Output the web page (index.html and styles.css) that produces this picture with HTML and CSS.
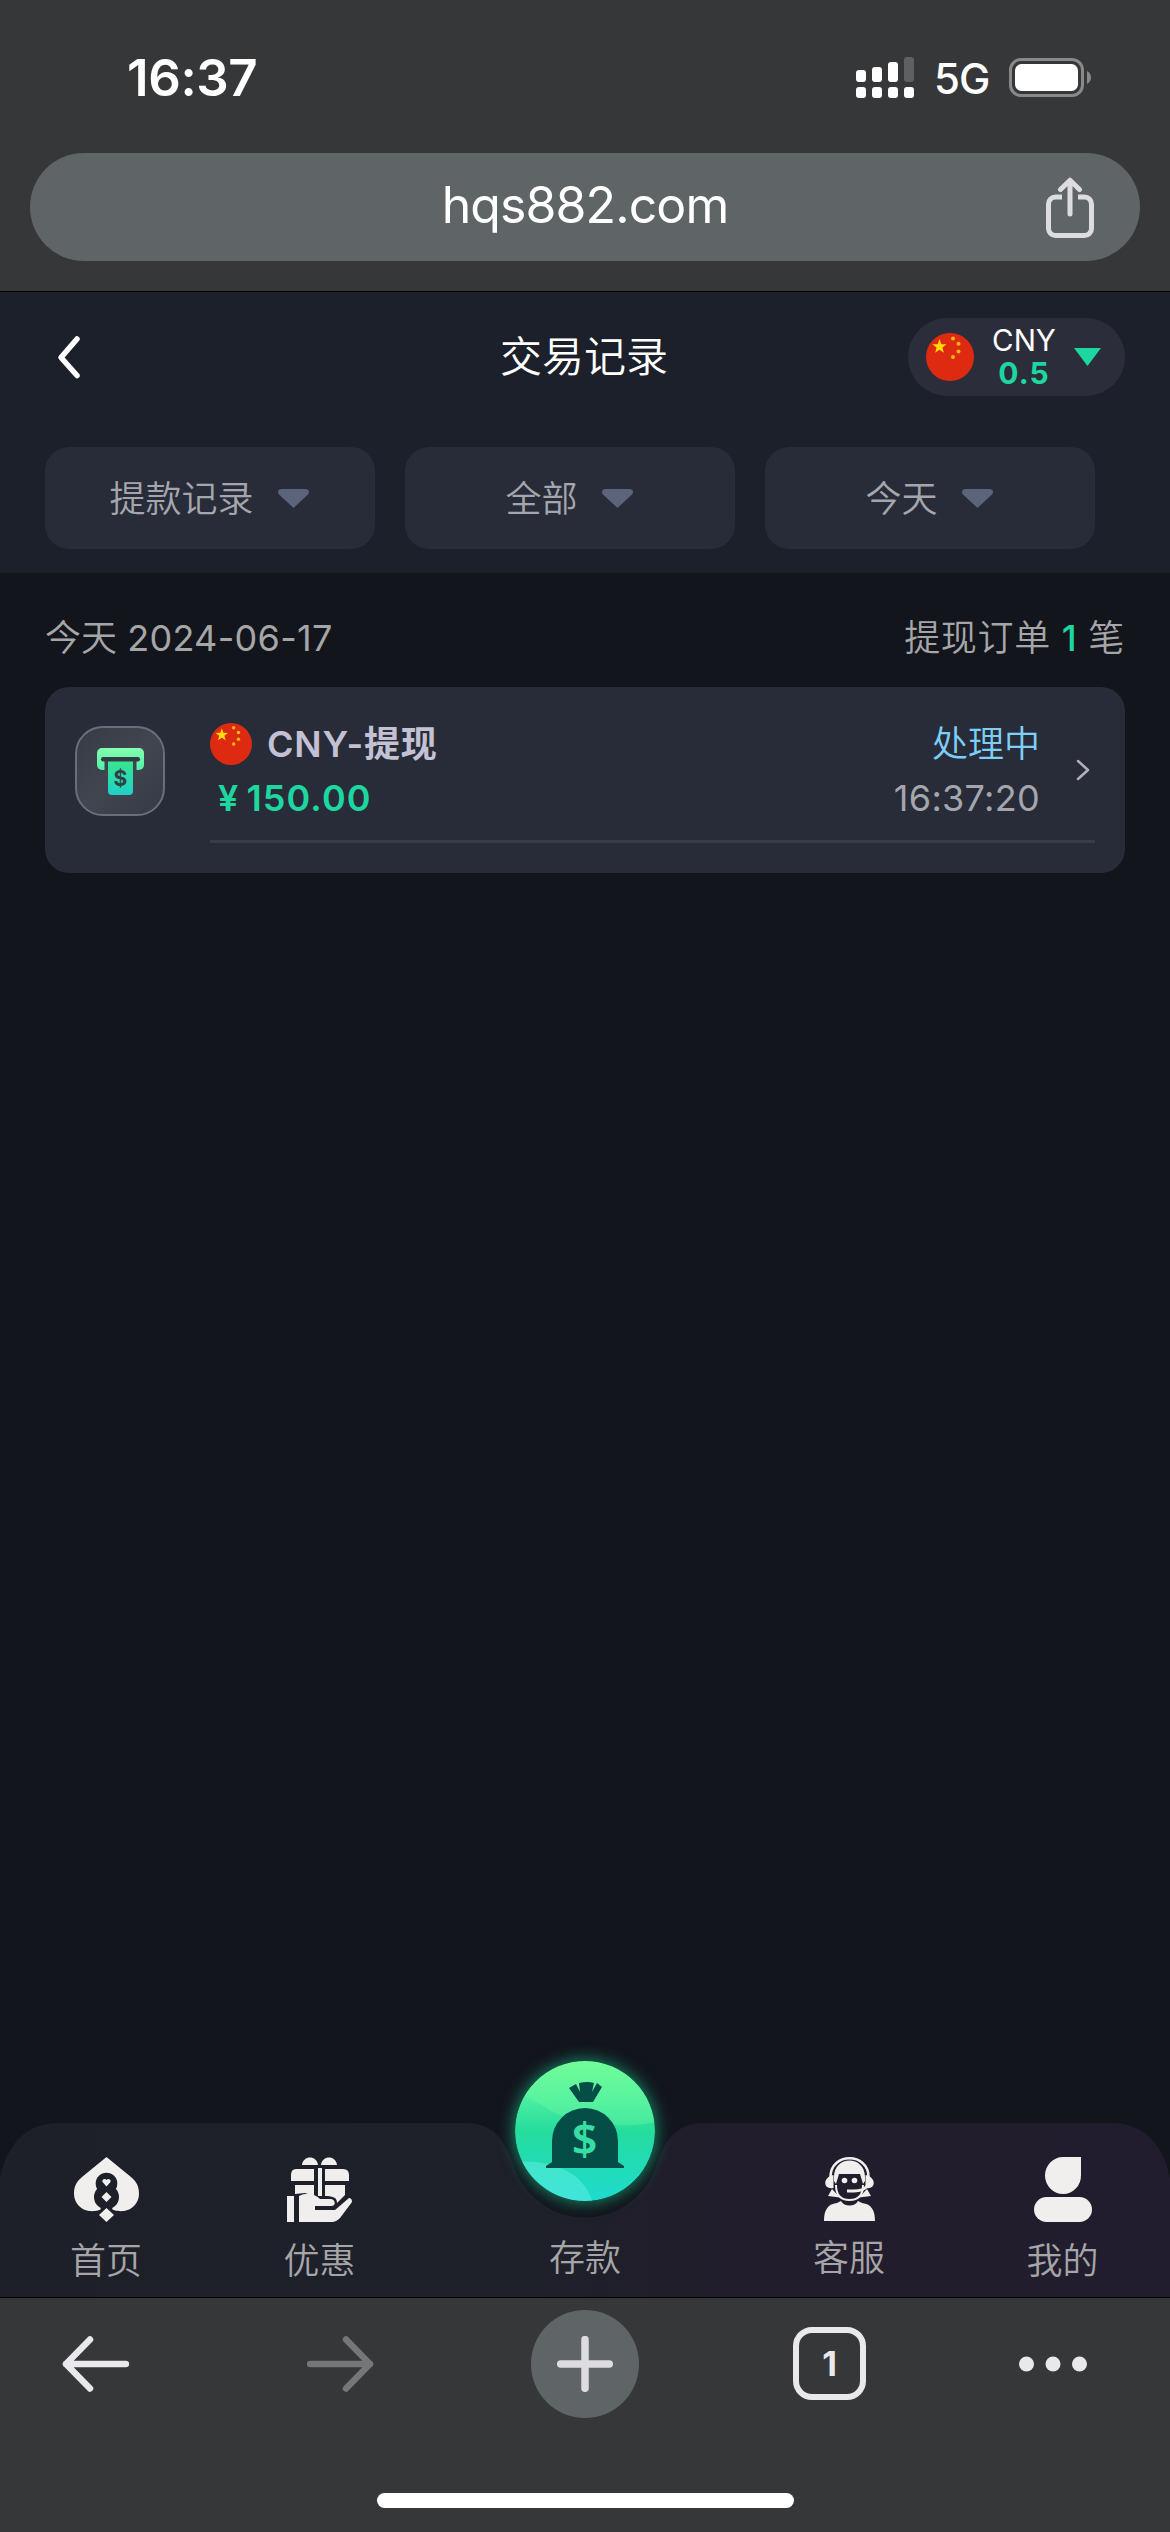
FILE: index.html
```html
<!DOCTYPE html>
<html lang="zh-CN">
<head>
<meta charset="utf-8">
<title>交易记录</title>
<link rel="stylesheet" href="styles.css">
</head>
<body>
<svg width="0" height="0" class="defs">
  <defs>
    <linearGradient id="slot" x1="0" y1="0" x2="0" y2="1"><stop offset="0" stop-color="#86ffb0"/><stop offset="1" stop-color="#4ff0a4"/></linearGradient>
    <linearGradient id="bill" x1="0" y1="0" x2="0" y2="1"><stop offset="0" stop-color="#38e58f"/><stop offset="1" stop-color="#1fd0c8"/></linearGradient>
    <linearGradient id="coin" x1="0" y1="0" x2="0" y2="1"><stop offset="0" stop-color="#6efb95"/><stop offset=".28" stop-color="#4aeea0"/><stop offset=".5" stop-color="#25dc9c"/><stop offset="1" stop-color="#1edbd0"/></linearGradient>
    <linearGradient id="bar" x1="0" y1="0" x2="1" y2="0"><stop offset="0" stop-color="#1d2029"/><stop offset=".46" stop-color="#1e202a"/><stop offset=".62" stop-color="#211d2c"/><stop offset="1" stop-color="#211d2e"/></linearGradient>
    <clipPath id="coinclip"><circle cx="585" cy="71" r="70"/></clipPath>
    <symbol id="flag" viewBox="0 0 48 48">
      <circle cx="24" cy="24" r="24" fill="#df2a12"/>
      <path fill="#ffdb0c" d="M13.500 6l1.800 5.200 5.300.1-4.200 3.300 1.500 5.200-4.400-3-4.400 3 1.500-5.200-4.200-3.300 5.300-.1z"/>
      <g fill="#f5b41a"><circle cx="27" cy="5.500" r="2"/><circle cx="32.500" cy="10.800" r="2"/><circle cx="32.500" cy="18.600" r="2"/><circle cx="27" cy="24" r="2"/></g>
    </symbol>
  </defs>
</svg>

<header class="chrome-top">
  <div class="status">
    <span class="clock">16:37</span>
    <div class="indicators">
      <svg class="signal" width="58" height="41" viewBox="0 0 58 41" fill="#fff"><rect y="13" width="10" height="12" rx="3"/><rect x="16" y="10" width="10" height="15" rx="3"/><rect x="32" y="5" width="10" height="20" rx="3"/><rect x="48" width="10" height="25" rx="3" fill="#5f6062"/><rect y="30" width="10" height="11" rx="3"/><rect x="16" y="30" width="10" height="11" rx="3"/><rect x="32" y="30" width="10" height="11" rx="3"/><rect x="48" y="30" width="10" height="11" rx="3"/></svg>
      <span class="network">5G</span>
      <svg width="83" height="39" viewBox="0 0 83 39"><rect x="1.500" y="1.500" width="72" height="36" rx="10.500" fill="none" stroke="#88898b" stroke-width="3"/><rect x="6" y="6" width="63" height="27" rx="6.500" fill="#fff"/><path d="M78 13c5.300 2.500 5.300 10.500 0 13z" fill="#88898b"/></svg>
    </div>
  </div>
  <div class="address">
    <span class="domain">hqs882.com</span>
    <svg class="share" width="48" height="61" viewBox="0 0 48 61" fill="none" stroke="#dcdce1" stroke-width="5"><path d="M16 20H9.500a7 7 0 0 0-7 7v24.500a7 7 0 0 0 7 7h29a7 7 0 0 0 7-7V27a7 7 0 0 0-7-7H32"/><path d="M24 37V3.500M14.500 12.500L24 3.200l9.500 9.300" stroke-linecap="round" stroke-linejoin="round"/></svg>
  </div>
</header>

<section class="page-head">
  <div class="titlebar">
    <svg class="back" width="26" height="46" viewBox="0 0 26 46" fill="none" stroke="#fff" stroke-width="5.500" stroke-linecap="round" stroke-linejoin="round"><path d="M21 5L5 23.500 21 41.500"/></svg>
    <h1 class="title">交易记录</h1>
    <div class="wallet">
      <svg width="48" height="48"><use href="#flag"/></svg>
      <div class="wallet-text"><span class="code">CNY</span><span class="balance">0.5</span></div>
      <svg width="27" height="18" viewBox="0 0 27 18"><path d="M0 0h27L13.500 18z" fill="#1dd6a0"/></svg>
    </div>
  </div>
  <div class="filters">
    <div class="filter"><span>提款记录</span><svg width="31" height="19" viewBox="0 0 31 19"><path d="M4 0h23c4 0 5 3 3 5.500L15.500 19 1 5.500C-1 3 0 0 4 0z"/></svg></div>
    <div class="filter"><span>全部</span><svg width="31" height="19" viewBox="0 0 31 19"><path d="M4 0h23c4 0 5 3 3 5.500L15.500 19 1 5.500C-1 3 0 0 4 0z"/></svg></div>
    <div class="filter"><span>今天</span><svg width="31" height="19" viewBox="0 0 31 19"><path d="M4 0h23c4 0 5 3 3 5.500L15.500 19 1 5.500C-1 3 0 0 4 0z"/></svg></div>
  </div>
</section>

<main class="records">
  <div class="summary"><span>今天 <span class="date">2024-06-17</span></span><span class="orders">提现订单 <b class="count">1</b> 笔</span></div>
  <article class="card">
    <div class="type-icon">
      <svg width="47" height="47" viewBox="0 0 47 47"><rect width="47" height="22" rx="5" fill="url(#slot)"/><path d="M7.500 11.500h32v11h-32z" fill="#3e434e"/><rect x="4" y="9" width="39" height="4.500" rx="2.200" fill="#343b45"/><path d="M11 13.500h25V43a4 4 0 0 1-4 4H15a4 4 0 0 1-4-4z" fill="url(#bill)"/><text x="23.500" y="38" text-anchor="middle" class="bill-sign">$</text></svg>
    </div>
    <div class="card-body">
      <div class="details">
        <div class="line"><span class="kind"><svg width="42" height="42"><use href="#flag"/></svg>CNY-提现</span><span class="state">处理中</span></div>
        <div class="line second"><span class="amount"><span class="yen">¥</span>150.00</span><span class="time">16:37:20</span></div>
      </div>
      <svg class="more" width="14" height="22" viewBox="0 0 14 22" fill="none" stroke="#b0b1bb" stroke-width="2.500" stroke-linecap="round" stroke-linejoin="round"><path d="M2 2l10 9-10 9"/></svg>
    </div>
  </article>
</main>

<nav class="tabs">
  <svg class="tabs-bg" width="1170" height="237" viewBox="0 0 1170 237">
    <path fill="url(#bar)" d="M0 237V118Q12 63 60 63H465C500 63 507 88 516 112A75 75 0 0 0 654 112C663 88 670 63 705 63H1110Q1158 63 1170 118V237z"/>
    <circle class="glow" cx="585" cy="71" r="71" fill="#168c69"/>
    <g clip-path="url(#coinclip)">
      <circle cx="585" cy="71" r="70" fill="url(#coin)"/>
      <path d="M524 36c25 10 28 22 58 22 25 0 20 14 75 4V0H552z" fill="#7bffa0" opacity=".3"/>
      <path d="M510 102c40-3 74 8 83 42h-83z" fill="#74f4ee" opacity=".4"/>
    </g>
    <g fill="#054e48"><path d="M552 102V81A33 33 0 0 1 618 81V102l6 4v2h-78v-2z"/><path d="M569 28l7-4 4 8-1-9q9-2 15 0l-2 9 5-9 5 4-9 15h-14z"/></g>
    <text x="584.500" y="95" text-anchor="middle" class="bag-sign">$</text>
  </svg>
  <a class="tab home"><svg width="65" height="65" viewBox="0 0 65 65"><path fill="#f0efee" d="M32.500 0L57 20C63 25 65 30 65 37c0 9-7 16-15 17-5 .5-10 0-17.500-4C25 54 20 54.500 15 54 7 53 0 46 0 37c0-7 2-12 8-17z"/><g fill="#1d2029"><circle cx="32.500" cy="26.500" r="10.800"/><circle cx="32.500" cy="40" r="12.500"/><path d="M27 50h11l1 5h-13z"/></g><path fill="#f0efee" d="M32.500 51L40 58l-7.500 7-7.500-7zM32.500 29.500l-4-4.500c-1-3 3-4 4-2 1-2 5-1 4 2zM32.500 35l5 5-5 5-5-5z"/></svg><span>首页</span></a>
  <a class="tab offer"><svg width="65" height="65" viewBox="0 0 65 65" fill="#f0efee"><path d="M15 8C16-2 30-2 31 8zM34 8C35-2 49-2 50 8zM9 12h18v12H4v-6q0-6 5-6zM38 12h18q6 0 6 6v6H38zM31 11h4v28h-4zM8 28h19v11l-9-3-10 1zM38 28h20v10l-8 8c0-5-3-7-12-7zM0 39h7v26H0zM12 39c8-4 16-2 21 3h11c5 1 5 7 0 7H28v4h20L62 41q3 0 3 4L53 61q-4 4-8 4H12z"/></svg><span>优惠</span></a>
  <a class="tab deposit"><span>存款</span></a>
  <a class="tab service"><svg width="51" height="65" viewBox="0 0 51 65"><path d="M6.500 20C6.500-5 44.500-5 44.500 20" fill="none" stroke="#f0efee" stroke-width="2.500"/><path fill="#f0efee" d="M10 20C10-2 41-2 41 20v4l-2 3-3-10H15l-3 10-2-3z"/><path d="M12 28c0 10 5 15 13.500 15S39 38 39 28" fill="none" stroke="#f0efee" stroke-width="2"/><path fill="#f0efee" d="M9.500 18v13C-1.500 33-1.500 20 9.500 18zM41.500 18v13c11 2 11-11 0-13zM8 32l8 8.500L4 39zM43 32l-8 8.500L47 39zM0 64c0-10 3-17 13-18l4-2c3 6 14 6 17 0l4 2c10 1 13 8 13 18z"/><circle cx="20.500" cy="23.500" r="2.800" fill="#f0efee"/><circle cx="30.500" cy="23.500" r="2.800" fill="#f0efee"/><path d="M23 34h7c7 0 11-2 13-5" fill="none" stroke="#f0efee" stroke-width="3"/></svg><span>客服</span></a>
  <a class="tab mine"><svg width="58" height="65" viewBox="0 0 58 65" fill="#f0efee"><path d="M29 0h18v18A18 18.500 0 1 1 29 0z"/><rect y="40" width="58" height="25" rx="12.500"/></svg><span>我的</span></a>
</nav>

<footer class="chrome-bottom">
  <div class="toolbar">
    <svg width="67" height="56" viewBox="0 0 67 56" fill="none" stroke="#e8e8ed" stroke-width="6.500" stroke-linecap="round" stroke-linejoin="round"><path d="M28 3.500L4 28l24 24.500M4 28h60"/></svg>
    <svg width="67" height="56" viewBox="0 0 67 56" fill="none" stroke="#757678" stroke-width="6.500" stroke-linecap="round" stroke-linejoin="round"><path d="M39 3.500L63 28 39 52.500M63 28H3"/></svg>
    <div class="new-tab"><svg width="56" height="56" viewBox="0 0 56 56" stroke="#dcdce1" stroke-width="7.500" stroke-linecap="round"><path d="M28 3.700v48.600M3.700 28h48.600"/></svg></div>
    <div class="tab-count">1</div>
    <svg width="68" height="16" viewBox="0 0 68 16" fill="#e8e8ed"><circle cx="7.500" cy="8" r="7.500"/><circle cx="34" cy="8" r="7.500"/><circle cx="60.500" cy="8" r="7.500"/></svg>
  </div>
  <div class="home-indicator"></div>
</footer>
</body>
</html>
```
FILE: styles.css
```css
* { box-sizing: border-box; }
body { margin: 0; width: 1170px; height: 2532px; display: flex; flex-direction: column; overflow: hidden; background: #12151c; color: #a6a6a8; font-family: Inter, "Noto Sans CJK SC", sans-serif; font-size: 36px; }
svg { display: block; flex: none; }
.defs { position: absolute; }

.chrome-top { height: 292px; flex: none; background: #363739; border-bottom: 1px solid #000; }
.status { height: 153px; padding: 0 78px 0 127px; display: flex; justify-content: space-between; align-items: center; color: #fff; }
.clock { font-size: 51px; font-weight: 600; letter-spacing: -0.4px; line-height: 60px; padding-top: 3px; }
.indicators { display: flex; align-items: center; padding-top: 2px; }
.network { width: 95px; padding-left: 20px; font-size: 42px; font-weight: 500; line-height: 50px; letter-spacing: -1px; padding-top: 3px; }
.address { height: 108px; margin: 0 30px; padding: 0 46px; border-radius: 54px; background: #5f6467; display: grid; grid-template-columns: 48px 1fr 48px; align-items: center; }
.domain { grid-column: 2; text-align: center; color: #fff; font-size: 50px; line-height: 60px; letter-spacing: -0.9px; padding-bottom: 5px; }

.page-head { height: 281px; flex: none; background: #1c202b; }
.titlebar { height: 130px; padding: 26px 45px 26px 56px; display: grid; grid-template-columns: 1fr auto 1fr; align-items: center; }
.title { margin: 0; color: #fff; font-size: 42px; font-weight: 350; line-height: 60px; padding-right: 13px; }
.wallet { justify-self: end; width: 217px; height: 78px; padding: 0 24px 0 18px; border-radius: 39px; background: #2b2e3a; display: flex; align-items: center; justify-content: space-between; }
.wallet-text { display: flex; flex-direction: column; text-align: center; line-height: 33px; }
.code { color: #fff; font-size: 29.5px; }
.balance { color: #1dd6a0; font-size: 30px; font-weight: 700; letter-spacing: 1px; }
.filters { display: grid; grid-template-columns: repeat(3, 330px); gap: 30px; padding: 25px 45px 0; }
.filter { height: 102px; border-radius: 24px; background: #272c38; color: #a5a6ad; font-weight: 350; display: flex; align-items: center; justify-content: center; gap: 24px; padding-right: 2px; }
.filter span { line-height: 52px; margin-top: 2px; }
.filter svg { fill: #5c647b; }

.records { flex: 1; padding: 39px 45px 0; }
.summary { display: flex; justify-content: space-between; height: 75px; line-height: 52px; font-weight: 350; }
.date { letter-spacing: .3px; font-weight: 400; }
.orders { letter-spacing: .7px; }
.count { color: #1dd6a0; font-weight: 500; }
.card { height: 186px; border-radius: 24px; background: #272c38; padding: 30px; display: flex; gap: 45px; }
.type-icon { width: 90px; height: 90px; margin-top: 9px; border: 2px solid #6b6e77; border-radius: 28px; background: linear-gradient(135deg, #363b46, #414550 50%, #343a46); display: flex; align-items: center; justify-content: center; }
.bill-sign { font: 700 21px Inter, sans-serif; fill: #2f4048; }
.card-body { width: 885px; height: 126px; border-bottom: 3px solid #373c4a; display: flex; justify-content: space-between; padding-right: 5px; }
.details { width: 830px; }
.line { height: 54px; line-height: 54px; display: flex; justify-content: space-between; }
.kind { display: flex; align-items: center; gap: 15px; color: #c3c1d3; font-weight: 600; letter-spacing: .8px; }
.state { color: #7dcff8; font-weight: 350; }
.amount { color: #1dd6a0; font-weight: 600; padding-left: 8px; letter-spacing: 1.1px; }
.yen { margin-right: 7px; }
.time { color: #a5a6ad; letter-spacing: .3px; }
.more { margin-top: 42px; }

.tabs { position: relative; height: 174px; flex: none; display: grid; grid-template-columns: 212px 215px 316px 212px 215px; }
.tabs-bg { position: absolute; left: 0; bottom: 0; overflow: visible; }
.glow { filter: blur(8px); }
.bag-sign { font: 600 45px "Noto Sans", sans-serif; fill: #35dfa3; }
.tab { position: relative; display: flex; flex-direction: column; align-items: center; padding-top: 34px; color: #a6a6a8; font-weight: 350; }
.tab span { line-height: 52px; margin-top: 13px; }
.deposit span { margin-top: 75px; }
.service span { margin-top: 10px; }

.chrome-bottom { height: 235px; flex: none; border-top: 1px solid #000; background: #363739; display: flex; flex-direction: column; align-items: center; }
.toolbar { width: 100%; height: 131px; padding-left: 62px; display: grid; grid-template-columns: 245px 224px 262px 226px auto; align-items: center; }
.new-tab { width: 108px; height: 108px; border-radius: 50%; background: #5f6467; display: flex; align-items: center; justify-content: center; }
.tab-count { width: 73px; height: 73px; border: 6px solid #e8e8ed; border-radius: 19px; color: #e8e8ed; font-size: 34px; font-weight: 700; line-height: 62px; text-align: center; }
.home-indicator { width: 417px; height: 15px; margin-top: 64px; border-radius: 8px; background: #fff; }
```
